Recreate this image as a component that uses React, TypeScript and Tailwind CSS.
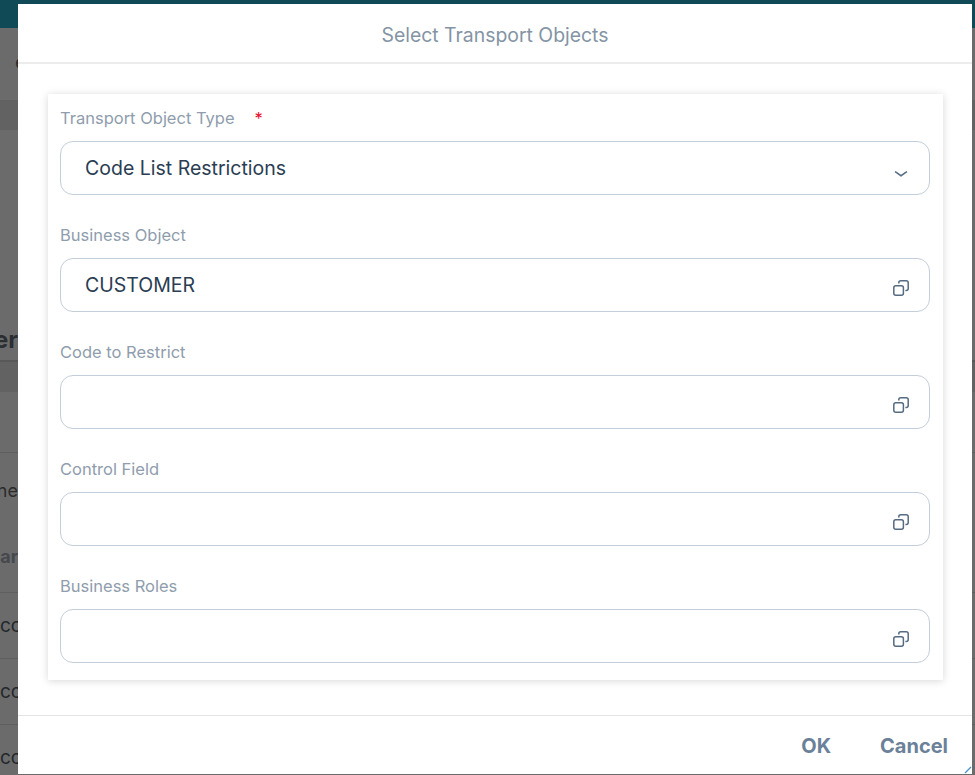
const sans = "font-['Inter',sans-serif]";

function CopyIcon() {
  return (
    <svg width="16" height="16" viewBox="0 0 16 16" fill="none" stroke="#556b82" strokeWidth="1.5" className="shrink-0 mt-[5px]">
      <rect x="0.8" y="5.8" width="9.6" height="9.4" rx="2" />
      <path d="M5.8 3.6V2.8a2 2 0 0 1 2-2h5.4a2 2 0 0 1 2 2v5.6a2 2 0 0 1-2 2h-.8" />
    </svg>
  );
}

function SelectArrow() {
  return (
    <svg width="16" height="8" viewBox="0 0 16 8" fill="none" stroke="#556b82" strokeWidth="1.6" className="shrink-0 mt-[11px]">
      <path d="M2 1.6c2 1.2 4 2.8 6 4.2c2-1.4 4-3 6-4.2" />
    </svg>
  );
}

function Field({ label, value, required, select }: { label: string; value?: string; required?: boolean; select?: boolean }) {
  return (
    <div className="flex flex-col">
      <div className="flex items-center h-[46px] text-[16.5px] text-[#8f9dad]">
        <span>{label}</span>
        {required && <span className="ml-[20px] text-[#e8112d]">*</span>}
      </div>
      <div className="flex items-center justify-between h-[54px] rounded-[13px] border border-[#c3ced9] pl-[24px] pr-[20px] text-[19.5px] text-[#2a3d52]">
        <span className="pt-[2px]">{value}</span>
        {select ? <SelectArrow /> : <CopyIcon />}
      </div>
    </div>
  );
}

function BackgroundPage() {
  return (
    <div className="w-full h-full flex flex-col bg-[#6b6b6b]">
      <div className="h-[28px] bg-[#0f4a56] shrink-0" />
      <div className="h-[72px] flex items-center shrink-0 text-[20px] text-[#2c2c2c]">
        <span className="w-[18px] overflow-hidden pl-[15px] pb-[4px]">e</span>
      </div>
      <div className="h-[30px] bg-[#626262] shrink-0" />
      <div className="h-[230px] flex items-end shrink-0 pb-[8px]">
        <div className="w-[18px] overflow-hidden flex justify-end text-[24px] font-bold text-[#2b2f33] leading-none">er</div>
      </div>
      <div className="h-[2px] bg-[#585858] shrink-0" />
      <div className="h-[30px] bg-[#626262] shrink-0" />
      <div className="h-[61px] border-b border-[#5f5f5f] shrink-0" />
      <div className="h-[74px] flex items-center shrink-0">
        <div className="w-[18px] overflow-hidden flex justify-end text-[18px] text-[#2b2b2b]">ne</div>
      </div>
      <div className="h-[66px] flex items-center border-b border-[#5f5f5f] shrink-0 pb-[6px]">
        <div className="w-[18px] overflow-hidden flex justify-end text-[18px] font-bold text-[#45494d]">lar</div>
      </div>
      {[0, 1, 2].map((i) => (
        <div key={i} className="h-[66px] flex items-center border-b border-[#5f5f5f] shrink-0 pt-[2px]">
          <div className="w-[18px] overflow-hidden text-[19px] text-[#24282c] whitespace-nowrap">cc</div>
        </div>
      ))}
    </div>
  );
}

export default function App() {
  return (
    <div className={`relative w-[975px] h-[775px] overflow-hidden ${sans}`}>
      <BackgroundPage />
      <div className="absolute left-[18px] top-[4px] w-[954px] h-[770px] bg-white flex flex-col">
        <header className="h-[60px] shrink-0 flex items-center justify-center border-b-2 border-[#ececec] pt-[5px] text-[19.4px] text-[#8494a4]">
          Select Transport Objects
        </header>
        <main className="flex-1 pl-[30px] pr-[29px] pt-[30px]">
          <div className="flex flex-col gap-[17px] bg-white shadow-[0_1px_8px_rgba(0,0,0,0.16)] pt-[1px] pl-[12px] pr-[13px] h-[586px]">
            <Field label="Transport Object Type" value="Code List Restrictions" required select />
            <Field label="Business Object" value="CUSTOMER" />
            <Field label="Code to Restrict" />
            <Field label="Control Field" />
            <Field label="Business Roles" />
          </div>
        </main>
        <footer className="h-[59px] shrink-0 flex items-center justify-end gap-[49px] pr-[24px] pt-[2px] border-t border-[#e5e5e5] text-[20px] font-bold text-[#6b8199]">
          <button>OK</button>
          <button>Cancel</button>
        </footer>
        <svg width="8" height="8" viewBox="0 0 8 8" fill="none" stroke="#4a90c8" strokeWidth="1.3" className="absolute right-0 bottom-0">
          <path d="M1 7 7 1" />
        </svg>
      </div>
    </div>
  );
}
